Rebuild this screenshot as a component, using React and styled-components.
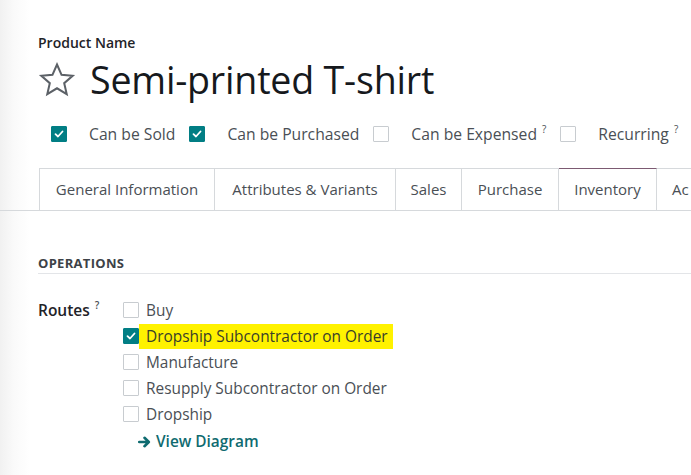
import React from "react";
import styled, { createGlobalStyle } from "styled-components";

const Global = createGlobalStyle`
  html, body { margin: 0; padding: 0; background: #fff; }
  body { font-family: "Open Sans", "Noto Sans", sans-serif; color: #4a4f55; }
  #root { width: 691px; height: 475px; overflow: hidden; }
`;

const Page = styled.div`
  width: 691px;
  height: 475px;
  overflow: hidden;
  background: linear-gradient(to right, #f1f1f1 0px, #fafafa 14px, #ffffff 30px);
  padding-top: 33px;
  box-sizing: border-box;
`;

const Header = styled.div`
  padding-left: 38px;
`;

const FieldLabel = styled.div`
  font-size: 14px;
  font-weight: 600;
  color: #1f2328;
  line-height: 20px;
`;

const TitleRow = styled.div`
  display: flex;
  align-items: center;
  gap: 14px;
  margin-top: 2px;
  height: 50px;
`;

const Title = styled.h1`
  margin: 0;
  font-size: 37.6px;
  font-weight: 400;
  color: #16191d;
  letter-spacing: -0.2px;
  line-height: 48px;
`;

const Options = styled.div`
  display: flex;
  align-items: center;
  margin-top: 18px;
  padding-left: 13px;
  height: 22px;
`;

const Option = styled.label`
  display: flex;
  align-items: center;
  gap: 22px;
  margin-right: 14px;
  font-size: 15.7px;
  color: #4a4f55;
  white-space: nowrap;
`;

const Box = styled.span`
  width: 16px;
  height: 16px;
  box-sizing: border-box;
  border-radius: 1px;
  display: inline-flex;
  align-items: center;
  justify-content: center;
  flex: none;
  background: ${(p) => (p.$checked ? "#017e84" : "#fff")};
  border: 1px solid ${(p) => (p.$checked ? "#017e84" : "#c8ccd0")};
`;

const Sup = styled.span`
  font-size: 10px;
  margin-left: 5px;
  position: relative;
  top: -0.75em;
  vertical-align: baseline;
  color: #4a4f55;
`;

const TabBar = styled.div`
  display: flex;
  margin-top: 23px;
  padding-left: 39px;
  border-bottom: 1px solid #d6d9dc;
  height: 42px;
  box-sizing: content-box;
  white-space: nowrap;
  overflow: hidden;
`;

const Tab = styled.div`
  flex: none;
  box-sizing: border-box;
  width: ${(p) => p.$w}px;
  height: 43px;
  display: flex;
  align-items: center;
  justify-content: ${(p) => (p.$cut ? "flex-start" : "center")};
  padding-left: ${(p) => (p.$cut ? "15px" : "0")};
  padding-bottom: 2px;
  font-size: 15px;
  color: #4a4f55;
  background: #fff;
  border: 1px solid #d6d9dc;
  border-left: ${(p) => (p.$first ? "1px solid #d6d9dc" : "none")};
  border-top: 1px solid ${(p) => (p.$active ? "#7c5a72" : "#d6d9dc")};
  border-bottom: ${(p) => (p.$active ? "1px solid #fff" : "1px solid #d6d9dc")};
  ${(p) => (p.$active ? "border-right: 1px solid #d6d9dc;" : "")}
`;

const Section = styled.div`
  padding-left: 38px;
  margin-top: 44px;
`;

const SectionTitle = styled.div`
  font-size: 13px;
  font-weight: 700;
  letter-spacing: 0.3px;
  color: #3d4247;
  padding-bottom: 1px;
  border-bottom: 1px solid #e3e5e8;
  line-height: 17px;
`;

const FieldRow = styled.div`
  display: grid;
  grid-template-columns: 85px 1fr;
  margin-top: 23px;
`;

const RouteLabel = styled.div`
  font-size: 15.5px;
  font-weight: 600;
  color: #1f2328;
  line-height: 26px;
  height: 26px;
`;

const RouteList = styled.div`
  display: flex;
  flex-direction: column;
`;

const Route = styled.div`
  display: flex;
  align-items: center;
  height: 26px;
  font-size: 15.4px;
  color: #4a4f55;
`;

const RouteText = styled.span`
  display: inline-block;
  height: 25px;
  line-height: 25px;
  margin-left: ${(p) => (p.$hl ? "0px" : "7px")};
  padding: ${(p) => (p.$hl ? "0 5px 0 7px" : "0")};
  background: ${(p) => (p.$hl ? "#fff200" : "transparent")};
  color: ${(p) => (p.$hl ? "#3a3f2a" : "#4a4f55")};
`;

const Link = styled.div`
  display: flex;
  align-items: center;
  gap: 5px;
  margin-top: 4px;
  margin-left: 15px;
  font-size: 15.4px;
  font-weight: 600;
  color: #0f6b70;
`;

const Check = () => (
  <svg width="10" height="8" viewBox="0 0 10 8">
    <path d="M1.5 4.2 L4 6.5 L8.5 1.5" stroke="#fff" strokeWidth="1.8" fill="none" strokeLinecap="round" strokeLinejoin="round" />
  </svg>
);

const CheckBox = ({ checked }) => <Box $checked={checked}>{checked && <Check />}</Box>;

const Star = () => (
  <svg width="38" height="36" viewBox="0 0 24 23">
    <path
      d="M12 1.6 L14.9 8.2 L22 8.8 L16.6 13.5 L18.2 20.5 L12 16.8 L5.8 20.5 L7.4 13.5 L2 8.8 L9.1 8.2 Z"
      fill="none"
      stroke="#5c6167"
      strokeWidth="1.3"
      strokeLinejoin="miter"
    />
  </svg>
);

const Arrow = () => (
  <svg width="13" height="12" viewBox="0 0 13 12">
    <path d="M1.2 6 H10.5 M6.5 1.8 L10.8 6 L6.5 10.2" stroke="#0f6b70" strokeWidth="2.6" fill="none" strokeLinecap="round" strokeLinejoin="round" />
  </svg>
);

const tabs = [
  { t: "General Information", w: 176 },
  { t: "Attributes & Variants", w: 181 },
  { t: "Sales", w: 66 },
  { t: "Purchase", w: 97 },
  { t: "Inventory", w: 98, active: true },
  { t: "Ac", w: 40, cut: true },
];

const routes = [
  { t: "Buy" },
  { t: "Dropship Subcontractor on Order", checked: true, hl: true },
  { t: "Manufacture" },
  { t: "Resupply Subcontractor on Order" },
  { t: "Dropship" },
];

export default function App() {
  return (
    <>
      <Global />
      <Page>
        <Header>
          <FieldLabel>Product Name</FieldLabel>
          <TitleRow>
            <Star />
            <Title>Semi-printed T-shirt</Title>
          </TitleRow>
          <Options>
            <Option><CheckBox checked /><span>Can be Sold</span></Option>
            <Option><CheckBox checked /><span>Can be Purchased</span></Option>
            <Option><CheckBox /><span>Can be Expensed<Sup>?</Sup></span></Option>
            <Option><CheckBox /><span>Recurring<Sup>?</Sup></span></Option>
          </Options>
        </Header>
        <TabBar>
          {tabs.map((tb, i) => (
            <Tab key={tb.t} $w={tb.w} $first={i === 0} $active={tb.active} $cut={tb.cut}>{tb.t}</Tab>
          ))}
        </TabBar>
        <Section>
          <SectionTitle>OPERATIONS</SectionTitle>
          <FieldRow>
            <RouteLabel>Routes<Sup>?</Sup></RouteLabel>
            <RouteList>
              {routes.map((r) => (
                <Route key={r.t}>
                  <CheckBox checked={r.checked} />
                  <RouteText $hl={r.hl}>{r.t}</RouteText>
                </Route>
              ))}
              <Link><Arrow />View Diagram</Link>
            </RouteList>
          </FieldRow>
        </Section>
      </Page>
    </>
  );
}
